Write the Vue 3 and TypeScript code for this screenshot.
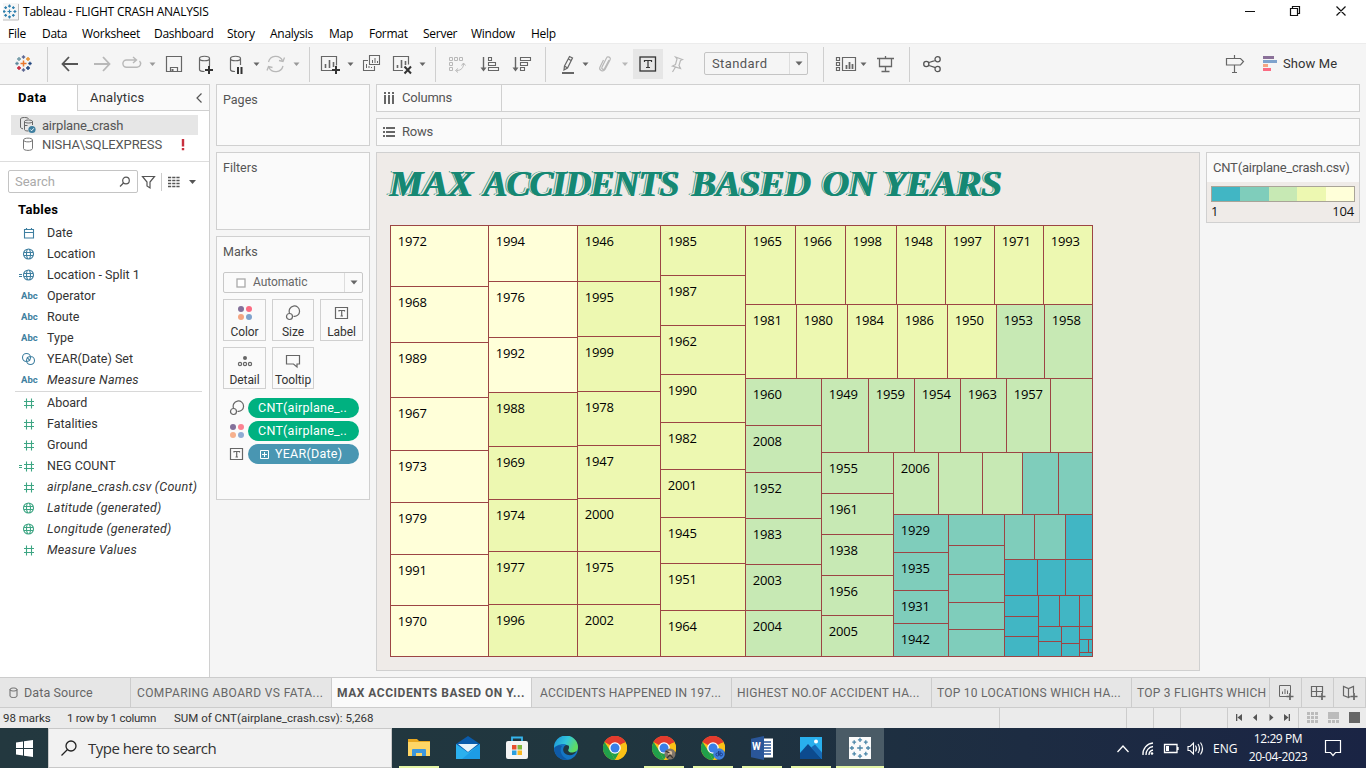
<script setup lang="ts">
interface Shape { d: string; s?: string; f?: string; w?: number }
interface Icon { x: number; w: number; p: Shape[] }

const G = '#666'
const L = '#b8b8b8'
const K = '#333'
const st = (d: string, s = G, w = 1.3): Shape => ({ d, s, w })
const fl = (d: string, f = G): Shape => ({ d, f })
const caret = (x: number, c = G) => fl(`M${x - 3} 62.5h6l-3 3.6z`, c)
const sep = (x: number) => fl(`M${x} 47h1v35h-1z`, '#cfcfcf')
const cross = (x: number, y: number, r: number, c: string, w = 1.3) =>
  st(`M${x - r} ${y}h${2 * r}M${x} ${y - r}v${2 * r}`, c, w)

const toolsA: Icon[] = [
  { x: 0, w: 60, p: [
    cross(23.5, 63.5, 3, '#e8762d', 1.5), cross(23.5, 57, 1.7, '#5b6591'), cross(23.5, 70, 1.7, '#5b6591'),
    cross(17, 63.5, 1.7, '#5b879b'), cross(30, 63.5, 1.7, '#1f447e'),
    cross(19, 59, 2, '#7199a6', 1.4), cross(28, 59, 2, '#eb912c', 1.4), cross(19, 68, 2, '#c72035', 1.4), cross(28, 68, 2, '#1f447e', 1.4),
    sep(47) ] },
  { x: 60, w: 28, p: [st('M62.5 64H78M69 57l-6.5 7 6.5 7', '#555', 1.8)] },
  { x: 88, w: 32, p: [st('M94 64h15.500M103 57l6.500 7-6.500 7', L, 1.8)] },
  { x: 120, w: 42, p: [st('M135.500 60h-9a3.600 3.600 0 0 0 0 7.200h10.500a3.600 3.600 0 0 0 2.500-6.200M133 57l3.500 3-3.500 3', L, 1.4), caret(152.500, '#999')] },
  { x: 162, w: 32, p: [st('M166.500 56.500h15v15h-15zM170.500 71v-3.500h7V71', G, 1.2), fl('M171.500 69h2v2h-2z')] },
  { x: 194, w: 32, p: [
    st('M199.500 58.500v11c0 1 2 2 5 2M209.500 58.500V66M199.500 58.500c0-3 10-3 10 0s-10 3-10 0', G, 1.2), cross(209, 70, 4, K, 2)] },
  { x: 226, w: 38, p: [
    st('M230.500 58.500v11c0 1 2 2 4.500 2M240.500 58.500V65M230.500 58.500c0-3 10-3 10 0s-10 3-10 0', G, 1.2),
    fl('M237 67h2v7h-2zM240.500 67h2v7h-2z', K), caret(256.500)] },
  { x: 264, w: 54, p: [
    st('M268.500 62a7.500 7.500 0 0 1 14-1.500M283 66a7.500 7.500 0 0 1-14 1.500M284.500 57.500l-1.500 4-4-1M267 70.500l1.500-4 4 1', L, 1.3), caret(296.500, '#999'), sep(309)] },
  { x: 318, w: 42, p: [
    st('M334 70.500h-12.500v-14h15v9', G, 1.2), st('M325.500 68v-4M329.500 68v-8M333.500 67v-5', G, 1.6), cross(336, 70, 4, K, 2), caret(350.500)] },
  { x: 360, w: 30, p: [
    st('M369.500 55.500h10v9h-10zM368 60.500h-4.500v10h11v-4.500', G, 1.1), st('M372.500 63v-3M375 63v-5M377.500 63v-2M366.500 68v-4M369 68v-2M371.500 68v-1', G, 1)] },
  { x: 390, w: 55, p: [
    st('M403 70.500h-9.500v-14h15v8', G, 1.2), st('M397.500 68v-3M401.500 68v-8M405.500 65v-4', G, 1.6), st('M404.500 66.500l6.500 7M411 66.500l-6.500 7', K, 2), caret(422.500), sep(435)] },
  { x: 445, w: 31, p: [
    st('M449.500 57.500h3v3h-3zM454.500 57.500h3v3h-3zM459.500 57.500h3v3h-3zM449.500 62.500h3v3h-3zM449.500 67.500h3v3h-3zM463.500 63.500c0 4-2 7-7 7M461.500 65.500l2-2.500 2 2.500M458 68.500l-2.500 2 2.500 2', L, 1)] },
  { x: 475, w: 31, p: [
    st('M482.500 57v12', G, 1.4), fl('M479.500 67.500h6l-3 4z'), st('M487.500 57.500h3v3h-3zM487.500 62.500h7v3h-7zM487.500 67.500h10v3h-10z', G, 1.1)] },
  { x: 505, w: 46, p: [
    st('M513.500 57v12', G, 1.4), fl('M510.500 67.500h6l-3 4z'), st('M518.500 57.500h10v3h-10zM518.500 62.500h7v3h-7zM518.500 67.500h4v3h-4z', G, 1.1), sep(543)] },
  { x: 549, w: 37, p: [
    st('M560.500 66l5-9.500 3 1.500-5 10-3.500 2zM560.500 66l3 2M564.500 59l2.500 1.500', G, 1.2), fl('M558 72h12v2h-12z'), caret(581.500)] },
  { x: 585.5, w: 43, p: [
    st('M604.500 60l-4.500 8.500c-1 1.700-3.500.5-2.500-1.500l4.500-9c1-2.500 5-.5 3.500 2l-5 9.500c-2 3-6.500.5-5-2.500l3.500-7', L, 1.2), caret(620.500, L)] },
]
const toolsB: Icon[] = [
  { x: 656, w: 41, p: [st('M668.500 57l7 2.500-2 1-1.500 5 1.500 3-8-2.500 3-1.500 1.500-5.500zM668.500 67l-3 5', L, 1.2)] },
]
const toolsC: Icon[] = [
  { x: 795, w: 60, p: [
    sep(810), st('M823.500 57.500h3v3h-3zM823.500 62.500h3v3h-3zM823.500 67.500h3v3h-3zM829.500 57.500h13v13h-13z', G, 1.2),
    st('M833.500 69v-4M836.500 69v-7M839.500 69v-5', G, 1.8), caret(850.500)] },
  { x: 854, w: 46, p: [st('M863 58.500h17M865.500 58.500v8h12v-8M871.500 56v2M871.500 67v4M867.500 71.500h8', G, 1.3), sep(895)] },
  { x: 896, w: 30, p: [st('M908 64m-2.300 0a2.600 2.600 0 1 0 5.200 0a2.600 2.600 0 1 0-5.200 0M917 59.200a2.600 2.600 0 1 0 5.200 0a2.600 2.600 0 1 0-5.200 0M917 69a2.600 2.600 0 1 0 5.200 0a2.600 2.600 0 1 0-5.200 0M911 62.500l6.500-2.200M911 65.500l6.500 2.200', '#555', 1.3)] },
]
const toolsR: Icon[] = [
  { x: 1222, w: 36, p: [st('M1226.500 58.500h14l3 3-3 3.500h-14zM1234.500 55v3.500M1234.500 65v7M1232 72.500h5', G, 1.2)] },
  { x: 1258, w: 25, p: [fl('M1263 56h11v3h-11z', '#8a7098'), fl('M1263 60h14v3h-14z', '#7fa3cd'), fl('M1263 64h5v3h-5z', '#f4a582'), fl('M1263 68h8v3h-8z', '#fb6b82')] },
]

const menu = ['File', 'Data', 'Worksheet', 'Dashboard', 'Story', 'Analysis', 'Map', 'Format', 'Server', 'Window', 'Help']

const dims = [
  { k: 'cal', t: 'Date' }, { k: 'globe', t: 'Location' }, { k: 'eglobe', t: 'Location - Split 1' },
  { k: 'abc', t: 'Operator' }, { k: 'abc', t: 'Route' }, { k: 'abc', t: 'Type' },
  { k: 'set', t: 'YEAR(Date) Set' }, { k: 'abc', t: 'Measure Names', i: true },
]
const meas = [
  { k: 'num', t: 'Aboard' }, { k: 'num', t: 'Fatalities' }, { k: 'num', t: 'Ground' }, { k: 'enum', t: 'NEG COUNT' },
  { k: 'num', t: 'airplane_crash.csv (Count)', i: true }, { k: 'globe', t: 'Latitude (generated)', i: true },
  { k: 'globe', t: 'Longitude (generated)', i: true }, { k: 'num', t: 'Measure Values', i: true },
]

interface Cell { x: number; y: number; w: number; h: number; c: string; t: string }
const ramp = ['#41b6c4', '#7fcdbb', '#c7e9b4', '#edf8b1', '#ffffd9']
const cells: Cell[] = []
function add(x0: number, y0: number, x1: number, y1: number, c: number, t: string) {
  cells.push({ x: x0, y: y0, w: x1 - x0, h: y1 - y0, c: ramp[c], t })
}
function column(x0: number, x1: number, ys: number[], tones: string, labels = '') {
  const names = labels.split(' ')
  for (let i = 0; i < ys.length - 1; i++) add(x0, ys[i], x1, ys[i + 1], +tones[i], names[i] ?? '')
}
function row(y0: number, y1: number, xs: number[], tones: string, labels = '') {
  const names = labels.split(' ')
  for (let i = 0; i < xs.length - 1; i++) add(xs[i], y0, xs[i + 1], y1, +tones[i], names[i] ?? '')
}
column(390, 488, [225, 286, 342, 397, 450, 502, 554, 605, 656], '44444444', '1972 1968 1989 1967 1973 1979 1991 1970')
column(488, 577, [225, 281, 337, 392, 446, 499, 551, 604, 656], '44433333', '1994 1976 1992 1988 1969 1974 1977 1996')
column(577, 660, [225, 281, 336, 391, 445, 498, 551, 604, 656], '33333333', '1946 1995 1999 1978 1947 2000 1975 2002')
column(660, 745, [225, 275, 325, 374, 422, 469, 517, 563, 610, 656], '333333333', '1985 1987 1962 1990 1982 2001 1945 1951 1964')
row(225, 304, [745, 795, 845, 896, 945, 994, 1043, 1092], '3333333', '1965 1966 1998 1948 1997 1971 1993')
row(304, 378, [745, 796, 847, 897, 947, 996, 1044, 1092], '3333322', '1981 1980 1984 1986 1950 1953 1958')
column(745, 821, [378, 425, 472, 518, 564, 610, 656], '222222', '1960 2008 1952 1983 2003 2004')
row(378, 452, [821, 868, 914, 960, 1006, 1050, 1092], '222222', '1949 1959 1954 1963 1957')
column(821, 893, [452, 493, 534, 575, 615, 656], '22222', '1955 1961 1938 1956 2005')
row(452, 514, [893, 938, 982, 1022, 1058, 1092], '22211', '2006')
column(893, 948, [514, 552, 590, 623, 656], '1111', '1929 1935 1931 1942')
column(948, 1004, [514, 545, 574, 602, 629, 656], '11111')
row(514, 559, [1004, 1034, 1065, 1092], '110')
row(559, 595, [1004, 1037, 1065, 1092], '000')
column(1004, 1038, [595, 616, 636, 656], '000')
row(595, 626, [1038, 1059, 1079, 1092], '000')
column(1038, 1061, [626, 641, 656], '00')
column(1061, 1079, [626, 643, 656], '00')
add(1079, 626, 1092, 639, 0, '')
row(639, 652, [1079, 1088, 1092], '00')
add(1079, 652, 1092, 656, 0, '')

const sheets = [
  { t: 'COMPARING ABOARD VS FATA...', wide: true }, { t: 'MAX ACCIDENTS BASED ON Y...', on: true }, { t: 'ACCIDENTS HAPPENED IN 197...', after: true },
  { t: 'HIGHEST NO.OF ACCIDENT HA...' }, { t: 'TOP 10 LOCATIONS WHICH HA...' }, { t: 'TOP 3 FLIGHTS WHICH' },
]
const plusRing = [[0, 0, 3.2], [0, -6, 2.4], [0, 6, 2.4], [-6, 0, 2.4], [6, 0, 2.4], [-4.300, -4.300, 2.200], [4.300, -4.300, 2.200], [-4.300, 4.300, 2.200], [4.300, 4.300, 2.200]]
const ringPath = (cx: number, cy: number, k: number, m = 1) =>
  plusRing.map(([x, y, r]) => `M${cx + x * k - r * k * m} ${cy + y * k}h${2 * r * k * m}M${cx + x * k} ${cy + y * k - r * k * m}v${2 * r * k * m}`).join('')
</script>

<template>
  <div class="app">
    <header class="title">
      <svg width="17" height="18" viewBox="0 0 17 18"><path d="M0 0h16v17H0z" fill="#f6f6f6" /><path d="M15.500 1v16H0" stroke="#bbb" fill="none" /><path :d="ringPath(6.5, 8.5, 0.9, 0.7)" stroke="#2f80ae" stroke-width="1.200" /></svg>
      <span class="name">Tableau - FLIGHT CRASH ANALYSIS</span>
      <svg class="win" width="110" height="20" viewBox="1242 0 110 20"><g stroke="#111" fill="none" stroke-width="1.200"><path d="M1245 10.500h10M1290.500 7.500h7v7h-7zM1292.500 7V5.500h7v7H1298M1336.500 5.500l9 9M1345.500 5.500l-9 9" /></g></svg>
    </header>
    <nav class="menu"><span v-for="m in menu" :key="m">{{ m }}</span></nav>

    <div class="tools">
      <svg v-for="i in toolsA" :key="i.x" :width="i.w" height="40" :viewBox="`${i.x} 44 ${i.w} 40`"><path v-for="(p, n) in i.p" :key="n" :d="p.d" :stroke="p.s || 'none'" :fill="p.f || 'none'" :stroke-width="p.w" /></svg>
      <div class="tbtn"><svg width="18" height="16" viewBox="0 0 18 16"><rect x="1" y="1" width="15.500" height="14" fill="none" stroke="#333" stroke-width="1.300" /><path d="M5.500 6V4.500h7V6M9 4.500v7M7 11.500h4" fill="none" stroke="#333" stroke-width="1.200" /></svg></div>
      <svg v-for="i in toolsB" :key="i.x" :width="i.w" height="40" :viewBox="`${i.x} 44 ${i.w} 40`"><path v-for="(p, n) in i.p" :key="n" :d="p.d" :stroke="p.s || 'none'" :fill="p.f || 'none'" :stroke-width="p.w" /></svg>
      <div class="fit"><span>Standard</span><i><svg width="8" height="5" viewBox="0 0 8 5"><path d="M.5.500h7L4 4.500z" fill="#666" /></svg></i></div>
      <svg v-for="i in toolsC" :key="i.x" :width="i.w" height="40" :viewBox="`${i.x} 44 ${i.w} 40`"><path v-for="(p, n) in i.p" :key="n" :d="p.d" :stroke="p.s || 'none'" :fill="p.f || 'none'" :stroke-width="p.w" /></svg>
      <div class="grow"></div>
      <svg v-for="i in toolsR" :key="i.x" :width="i.w" height="40" :viewBox="`${i.x} 44 ${i.w} 40`"><path v-for="(p, n) in i.p" :key="n" :d="p.d" :stroke="p.s || 'none'" :fill="p.f || 'none'" :stroke-width="p.w" /></svg>
      <span class="showme">Show Me</span>
    </div>

    <main class="body">
      <aside class="pane">
        <div class="ptabs"><b>Data</b><div><span>Analytics</span><svg width="8" height="12" viewBox="0 0 8 12"><path d="M6.500 1.500L2 6l4.500 4.500" fill="none" stroke="#555" stroke-width="1.200" /></svg></div></div>
        <div class="sources">
          <div class="src on">
            <svg width="18" height="18" viewBox="0 0 18 18"><g fill="none" stroke="#666"><path d="M1.500 3c0-2 8-2 8 0M1.500 3v8c0 1 1 1.500 2.500 1.800" /><path d="M5.500 5.500c0-2 8-2 8 0s-8 2-8 0v8c0 1 1.500 1.500 4 1.500M13.500 5.500V9M5.500 9.500h3" /></g><circle cx="13" cy="13.500" r="3.600" fill="#3e7fa0" /><path d="M11.300 13.500l1.300 1.300 2.200-2.500" stroke="#fff" fill="none" /></svg>
            <span class="s1">airplane_crash</span>
          </div>
          <div class="src">
            <svg width="18" height="18" viewBox="0 0 18 18"><path d="M4.500 4v8.500c0 2.500 9 2.500 9 0V4c0-2.500-9-2.500-9 0s9 2.500 9 0" fill="none" stroke="#777" /></svg>
            <span class="s2">NISHA\SQLEXPRESS</span>
            <svg class="bang" width="4" height="12" viewBox="0 0 4 12"><path d="M.8 0h2.400v7.500H.8zM.8 9h2.400v2.300H.8z" fill="#c8303f" /></svg>
          </div>
        </div>
        <div class="find">
          <div class="box"><span>Search</span><svg width="12" height="12" viewBox="0 0 12 12"><circle cx="7" cy="4.500" r="3.300" fill="none" stroke="#555" stroke-width="1.200" /><path d="M4.500 7L1 10.500" stroke="#555" stroke-width="1.200" /></svg></div>
          <svg width="62" height="20" viewBox="138 171 62 20"><path d="M142.500 175.500h12l-4.500 5.500v6l-3-2v-4z" fill="none" stroke="#555" stroke-width="1.200" /><path d="M161.500 172v18" stroke="#ccc" /><path d="M168 176.500h12M168 179.500h12M168 182.500h12M168 185.500h12" stroke="#555" stroke-width="1.300" stroke-dasharray="3.200 1" /><path d="M189 179h7l-3.500 4z" fill="#555" /></svg>
        </div>
        <h4>Tables</h4>
        <ul v-for="(group, g) in [dims, meas]" :key="g" :class="['fields', g ? 'green' : 'blue']">
          <li v-for="f in group" :key="f.t">
            <b v-if="f.k === 'abc'">Abc</b>
            <svg v-else width="20" height="14" viewBox="0 0 20 14" fill="none" stroke="currentColor" stroke-width="1.100">
              <path v-if="f.k === 'cal'" d="M5.500 3.500h9v8.500h-9zM5.500 6.500h9M7.500 2v2M12.500 2v2" />
              <path v-if="f.k.endsWith('globe')" d="M4.500 7a5 5 0 1 0 10 0a5 5 0 1 0-10 0M7.500 7a2 5 0 1 0 4 0a2 5 0 1 0-4 0M5 5.500h9M5 8.500h9" />
              <path v-if="f.k === 'eglobe' || f.k === 'enum'" d="M0 6.500h3M0 8.500h3" />
              <path v-if="f.k === 'set'" d="M3.500 5.500a4 4 0 1 0 8 0a4 4 0 1 0-8 0M7.500 8.500a4 4 0 1 0 8 0a4 4 0 1 0-8 0M8 5l3 4" />
              <path v-if="f.k.endsWith('num')" d="M5 5.500h10M5 9.500h10M7.500 2.500v10M12.500 2.500v10" />
            </svg>
            <span :class="{ it: f.i }">{{ f.t }}</span>
          </li>
        </ul>
      </aside>

      <section class="shelves">
        <div class="card pages"><span>Pages</span></div>
        <div class="card filters"><span>Filters</span></div>
        <div class="card marks">
          <span>Marks</span>
          <div class="auto"><svg width="10" height="10" viewBox="0 0 10 10"><rect x="1" y="1" width="8" height="8" fill="#fff" stroke="#aaa" stroke-width="1.300" /></svg><span>Automatic</span><i><svg width="8" height="5" viewBox="0 0 8 5"><path d="M.5.500h7L4 4.500z" fill="#666" /></svg></i></div>
          <div class="btns">
            <div><svg width="16" height="16" viewBox="0 0 16 16"><circle cx="4" cy="4" r="3" fill="#83709a" /><circle cx="12" cy="4" r="3" fill="#fb6b82" /><circle cx="4" cy="12" r="3" fill="#f4a582" /><circle cx="12" cy="12" r="3" fill="#7fa3cd" /></svg>Color</div>
            <div><svg width="16" height="16" viewBox="0 0 16 16" fill="none" stroke="#666" stroke-width="1.200"><path d="M4.500 8a5.200 5.200 0 1 1 4 3.300" /><circle cx="4.500" cy="11.500" r="3" /></svg>Size</div>
            <div><svg width="16" height="16" viewBox="0 0 16 16" fill="none" stroke="#666" stroke-width="1.200"><path d="M1.500 2.500h12v11h-12zM5 6.500v-1h5.500v1M7.700 5.500V11M6.500 11H9" /></svg>Label</div>
            <div><svg width="16" height="16" viewBox="0 0 16 16" fill="none" stroke="#666" stroke-width="1.200"><circle cx="8" cy="5" r="2" fill="#666" stroke="none" /><circle cx="3" cy="11" r="1.600" /><circle cx="8" cy="11" r="1.600" /><circle cx="13" cy="11" r="1.600" /></svg>Detail</div>
            <div><svg width="16" height="16" viewBox="0 0 16 16" fill="none" stroke="#666" stroke-width="1.200"><path d="M1.500 2.500h13v8.500h-2.500v3l-3.500-3h-7z" /></svg>Tooltip</div>
          </div>
          <div class="pill"><svg width="16" height="16" viewBox="0 0 16 16" fill="none" stroke="#666" stroke-width="1.200"><path d="M4.500 8a5.200 5.200 0 1 1 4 3.300" /><circle cx="4.500" cy="11.500" r="3" /></svg><span>CNT(airplane_..</span></div>
          <div class="pill"><svg width="16" height="16" viewBox="0 0 16 16"><circle cx="4" cy="4" r="3" fill="#83709a" /><circle cx="12" cy="4" r="3" fill="#fb8291" /><circle cx="4" cy="12" r="3" fill="#f6b08d" /><circle cx="12" cy="12" r="3" fill="#8fabd3" /></svg><span>CNT(airplane_..</span></div>
          <div class="pill date"><svg width="16" height="16" viewBox="0 0 16 16" fill="none" stroke="#666" stroke-width="1.200"><path d="M1.500 2.500h12v11h-12zM5 6.500v-1h5.500v1M7.700 5.500V11M6.500 11H9" /></svg><span><svg width="11" height="9" viewBox="-2 0 11 9"><path d="M.5.500h8v8h-8zM4.500 2v5M2 4.500h5" fill="none" stroke="#fff" /></svg>YEAR(Date)</span></div>
        </div>
      </section>

      <section class="work">
        <div class="shelf"><div><svg width="12" height="12" viewBox="0 0 12 12"><path d="M1 0h2v2H1zM5 0h2v2H5zM9 0h2v2H9zM1 3h2v9H1zM5 3h2v9H5zM9 3h2v9H9z" fill="#666" /></svg><span class="cols">Columns</span></div></div>
        <div class="shelf"><div><svg width="12" height="12" viewBox="0 0 12 12"><path d="M0 1h2v2H0zM0 5h2v2H0zM0 9h2v2H0zM3 1h9v2H3zM3 5h9v2H3zM3 9h9v2H3z" fill="#666" /></svg><span>Rows</span></div></div>
        <div class="lower">
          <div class="sheet">
            <h1><span class="w1">MAX</span> <span class="w2">ACCIDENTS</span> <span class="w3">BASED</span> <span class="w4">ON</span> <span class="w5">YEARS</span></h1>
            <svg class="tree" width="704" height="433" viewBox="390 225 704 433">
              <g v-for="(c, n) in cells" :key="n">
                <rect :x="c.x + 0.5" :y="c.y + 0.5" :width="c.w" :height="c.h" :fill="c.c" stroke="#9c4544" />
                <text v-if="c.t" :x="c.x + 7.7" :y="c.y + 21">{{ c.t }}</text>
              </g>
            </svg>
          </div>
          <div class="legend">
            <div class="lhead">CNT(airplane_crash.csv)</div>
            <div class="strip"><i></i><i></i><i></i><i></i><i></i></div>
            <div class="ends"><span>1</span><span>104</span></div>
          </div>
        </div>
      </section>
    </main>

    <div class="tabs">
      <div class="ds"><svg width="9" height="12" viewBox="0 0 9 12"><path d="M1 2.500V9c0 2 7 2 7 0V2.500c0-2-7-2-7 0s7 2 7 0" fill="none" stroke="#666" /></svg><span>Data Source</span></div>
      <div v-for="s in sheets" :key="s.t" :class="{ on: s.on, wide: s.wide, after: s.after }"><span>{{ s.t }}</span></div>
      <div class="nw"><svg width="18" height="18" viewBox="0 0 18 18" fill="none" stroke="#666"><path d="M11 12.500H2.500v-11h11V9M5.500 10V7.500M8 10V5M10.500 10V6.500" /><path d="M13 9v7M9.500 12.500h7" stroke-width="1.700" /></svg></div>
      <div class="nw"><svg width="18" height="18" viewBox="0 0 18 18" fill="none" stroke="#666"><path d="M10 12.500H2.500v-10h11V9M2.500 7.500h11M7.500 2.500v10" stroke-width="1.200" /><path d="M13 9v7M9.500 12.500h7" stroke-width="1.700" /></svg></div>
      <div class="nw"><svg width="18" height="18" viewBox="0 0 18 18" fill="none" stroke="#666"><path d="M7.500 13.500l-5-2v-9l5 2 5-2V9M7.500 4.500v9l2-1" stroke-width="1.200" /><path d="M13 9v7M9.500 12.500h7" stroke-width="1.700" /></svg></div>
    </div>
    <div class="status">
      <span class="a">98 marks</span><span class="b">1 row by 1 column</span><span class="c">SUM of CNT(airplane_crash.csv): 5,268</span>
      <svg width="367" height="20" viewBox="999 708 367 20"><path d="M999.500 708v20M1126.500 708v20M1153.500 708v20M1180.500 708v20M1227.500 708v20M1298.500 708v20" stroke="#ccc" /><path d="M1236 714h1.300v7H1236zM1242 714v7l-4.500-3.500zM1257 714v7l-4-3.500zM1269.500 714v7l4-3.500zM1284 714v7l4.500-3.500zM1288.700 714h1.300v7h-1.300z" fill="#555" /><path d="M1307 712h3v3h-3zM1311 712h3v3h-3zM1315 712h3v3h-3zM1307 716h3v3h-3zM1311 716h3v3h-3zM1315 716h3v3h-3zM1307 720h3v3h-3zM1311 720h3v3h-3zM1315 720h3v3h-3zM1328 712h11v7h-11zM1328 720h3v3h-3zM1332 720h3v3h-3zM1336 720h3v3h-3z" fill="#bbb" /><path d="M1349 712h11v11h-11z" fill="#666" /></svg>
    </div>

    <footer class="bar">
      <div class="start"><svg width="17" height="17" viewBox="0 0 17 17"><path d="M0 2.400L7 1.400V8H0zM8 1.200L17 0v8H8zM0 9h7v6.600l-7-1zM8 9h9v8l-9-1.200z" fill="#fff" /></svg></div>
      <div class="ask"><svg width="18" height="18" viewBox="0 0 18 18"><circle cx="11" cy="7" r="5" fill="none" stroke="#222" stroke-width="1.300" /><path d="M7.500 10.500L1.500 16.500" stroke="#222" stroke-width="1.300" /></svg><span>Type here to search</span></div>
      <div class="apps">
        <div class="run"><svg width="24" height="24" viewBox="0 0 24 24"><path d="M1 3h9l2 2h11v15H1z" fill="#e9a820" /><path d="M1 6h22v14H1z" fill="#ffd666" /><path d="M5 20v-6q0-1 1-1h12q1 0 1 1v6h-4v-3H9v3z" fill="#3d97dd" /></svg></div>
        <div><svg width="24" height="24" viewBox="0 0 24 24"><path d="M0 8L12 0l12 8v15H0z" fill="#0a5bab" /><path d="M2 8h20l-10 8z" fill="#e8f4fb" /><path d="M0 8l12 8.500L24 8v15H0z" fill="#2bb0ee" /><path d="M24 8v15H6z" fill="#1490df" opacity=".6" /></svg></div>
        <div><svg width="24" height="24" viewBox="0 0 24 24"><path d="M7 6V1.500h10V6" fill="none" stroke="#35b4ec" stroke-width="1.800" /><rect x="1" y="5" width="22" height="18" rx="2" fill="#f4f4f4" /><path d="M7 9h4.500v4.500H7z" fill="#e8502e" /><path d="M12.500 9H17v4.500h-4.500z" fill="#7fb83d" /><path d="M7 14.500h4.500V19H7z" fill="#2a9fe0" /><path d="M12.500 14.500H17V19h-4.500z" fill="#fbb822" /></svg></div>
        <div><svg width="24" height="24" viewBox="0 0 24 24"><defs><linearGradient id="eg" x1="0" y1="0" x2="1" y2=".4"><stop offset="0" stop-color="#1a8fd6" /><stop offset=".55" stop-color="#32c5dc" /><stop offset="1" stop-color="#5fdc62" /></linearGradient></defs><circle cx="12" cy="12" r="12" fill="#1475c4" /><path d="M0 12A12 12 0 0 1 24 11c0 4-3 6-6.500 6-3.500 0-4.500-1.500-3.500-3 1.500-2.500-.5-6-5-6-4 0-8 2.500-9 4z" fill="url(#eg)" /><path d="M14.500 9.500c1.500 2.500-.5 3.500-.3 5 .3 2 4 3 8.300.800C20 20 14 20 11 17.500 8 15 9 10.500 12 9z" fill="#203743" /><path d="M8 10c-3 4-1 11 6 13.500C6 25 0 19 .3 12 3 9 6 8.500 8 10z" fill="#0f5aa6" /></svg></div>
        <div v-for="n in 3" :key="n" :class="{ run: n > 1 }"><svg width="24" height="24" viewBox="0 0 24 24"><circle cx="12" cy="12" r="12" fill="#fbc116" /><path d="M12 12L1.600 6A12 12 0 0 1 22.400 6z" fill="#e33b2e" /><path d="M1.600 6L7.300 15 12 24A12 12 0 0 1 1.600 6z" fill="#21a04b" /><path d="M7 14.500L12 24l5-9z" fill="#21a04b" /><path d="M12 24l5.200-9L17 9l5.400-3A12 12 0 0 1 12 24z" fill="#fbc116" /><path d="M1.600 6L12 6.500h10.600A12 12 0 0 0 1.600 6z" fill="#e33b2e" /><circle cx="12" cy="12" r="5.800" fill="#fff" /><circle cx="12" cy="12" r="4.500" fill="#397ee8" /><g v-if="n === 2"><circle cx="18" cy="18" r="5.500" fill="#80766b" /><circle cx="18" cy="17" r="2.200" fill="#d9bd9b" /><path d="M13.500 15l4 2M15 22l3-3 3 3" stroke="#3b3732" stroke-width="1.300" fill="none" /></g><g v-if="n === 3"><circle cx="18" cy="18" r="5.800" fill="#3f7fdc" /><path d="M15 18.500a1.500 1.500 0 1 0 3 0a1.500 1.500 0 1 0-3 0M18.500 18.500a1.500 1.500 0 1 0 3 0a1.500 1.500 0 1 0-3 0M17.500 15v4M19 15v4" stroke="#1f3f88" fill="none" /></g></svg></div>
        <div class="run"><svg width="24" height="24" viewBox="0 0 24 24"><path d="M12 2.500h11v19H12z" fill="#fff" /><path d="M14 6h7M14 9h7M14 12h7M14 15h7M14 18h7" stroke="#2a5699" stroke-width="1.400" /><path d="M1 2.800L14 0v24L1 21.200z" fill="#2a5699" /></svg><b>W</b></div>
        <div class="run"><svg width="24" height="24" viewBox="0 0 24 24"><path d="M1 1h22v22H1z" fill="#29b0ee" /><path d="M1 17L9 8l14 15H1z" fill="#0c4a8e" /><path d="M12 11.500l4-3 7 8V23z" fill="#1769b5" /><circle cx="17" cy="5.500" r="2" fill="#fff" /></svg></div>
        <div class="run act"><svg width="24" height="24" viewBox="0 0 24 24"><path d="M1 1h22v22H1z" fill="#fafafa" /><path :d="ringPath(12, 12, 1.35, 0.65)" stroke="#4b86a8" stroke-width="1.300" /></svg></div>
      </div>
      <div class="grow"></div>
      <svg width="98" height="40" viewBox="1113 728 98 40" fill="none" stroke="#fff" stroke-width="1.300"><path d="M1117.500 752l5.500-6 5.500 6" /><path d="M1143 755a11 11 0 0 1 10-12M1146 755a8 8 0 0 1 7-8.500M1149 755a5 5 0 0 1 4-5" /><circle cx="1152" cy="753.500" r="1.300" fill="#fff" stroke="none" /><path d="M1164.500 744.500h12.500v8h-12.500zM1178 747v3" /><path d="M1166 746h3v5h-3z" fill="#fff" stroke="none" /><path d="M1188 746.500h2l3.500-3.500v11l-3.500-3.500h-2zM1195.500 745.500q2 3 0 6M1198 744q3 4.500 0 9M1200.500 742.500q4 6 0 12" stroke-width="1.100" /></svg>
      <span class="eng">ENG</span>
      <div class="clock"><span>12:29 PM</span><span>20-04-2023</span></div>
      <svg class="note" width="18" height="18" viewBox="0 0 18 18"><path d="M1.500 1.500h15v12h-5l-2.500 3-2.500-3h-5z" fill="none" stroke="#fff" stroke-width="1.200" /></svg>
    </footer>
  </div>
</template>

<style>
body { margin: 0; overflow: hidden; }
</style>
<style scoped>
* { box-sizing: border-box; }
svg { display: block; flex: none; }
span, b { white-space: nowrap; }
.app { width: 1366px; height: 768px; display: flex; flex-direction: column; background: #f5f5f5; font-family: Roboto, "Liberation Sans", sans-serif; font-size: 13px; color: #333; overflow: hidden; }
.title { height: 23px; background: #fff; display: flex; align-items: center; padding: 1px 14px 1px 3px; flex: none; }
.name { margin-left: 3px; font: 12px "Open Sans", sans-serif; color: #000; letter-spacing: -0.22px; }
.win { margin-left: auto; margin-bottom: 1px; }
.menu { height: 20px; flex: none; background: #fff; display: grid; grid-template-columns: 34px 40px 72px 73px 43px 59px 40px 54px 48px 60px 50px; padding-left: 8px; font: 12px/22px "Open Sans", sans-serif; color: #000; letter-spacing: -0.27px; }
.tools { height: 41px; flex: none; display: flex; align-items: flex-start; border-top: 1px solid #ececec; }
.tbtn { width: 30px; height: 30px; margin-top: 5px; background: #e6e6e6; display: flex; align-items: center; justify-content: center; }
.fit { width: 104px; height: 23px; margin-top: 8px; border: 1px solid #c4c4c4; border-radius: 2px; display: flex; align-items: center; color: #555; }
.fit span { flex: 1; padding-left: 7px; letter-spacing: 0.4px; }
.fit i, .auto i { width: 18px; height: 100%; border-left: 1px solid #ddd; display: flex; align-items: center; justify-content: center; }
.grow { flex: 1; }
.showme { font-size: 13px; line-height: 40px; width: 83px; letter-spacing: 0.1px; }
.body { height: 593px; flex: none; display: flex; }
.pane { width: 210px; background: #fff; border-right: 1px solid #d0d0d0; border-top: 1px solid #d0d0d0; flex: none; }
.ptabs { display: flex; height: 26px; font-size: 13px; line-height: 25px; }
.ptabs b { width: 77px; padding-left: 18px; color: #000; letter-spacing: 0.5px; }
.ptabs div { flex: 1; display: flex; align-items: center; justify-content: space-between; background: #fafafa; border-left: 1px solid #d0d0d0; border-bottom: 1px solid #d0d0d0; padding: 0 6px 0 12px; letter-spacing: 0.15px; }
.sources { padding: 4px 11px 0; height: 51px; border-bottom: 1px solid #ddd; }
.src { display: flex; align-items: center; height: 20px; padding: 0 0 1px 8px; color: #555; }
.src.on { background: #e6e6e6; padding-bottom: 0; }
.src span { margin-left: 5px; letter-spacing: -0.12px; }
.src .s1 { letter-spacing: -0.2px; }
.bang { margin-left: 19px; }
.find { display: flex; align-items: center; padding: 8px 0 0 8px; }
.box { width: 130px; height: 23px; border: 1px solid #c4c4c4; border-radius: 2px; display: flex; align-items: center; justify-content: space-between; padding: 0 6px; color: #aaa; }
h4 { margin: 7px 0 3px 18px; font-size: 13px; line-height: 20px; color: #000; letter-spacing: 0.3px; }
.fields { list-style: none; margin: 0; padding: 0; font-size: 12.5px; }
.fields li { height: 21px; display: flex; align-items: center; padding: 0 0 2px 19px; }
.fields li span { margin-left: 8px; color: #333; }
.fields li b { width: 20px; padding-left: 2px; font-size: 9.5px; }
.fields li .it { font-style: italic; letter-spacing: 0.25px; }
.blue { color: #3e7fa0; }
.green { color: #3da583; }
.green::before { content: ""; display: block; margin: 0 7px 1px 15px; height: 1px; background: #d8d8d8; }
.shelves { width: 166px; padding-left: 6px; display: flex; flex-direction: column; gap: 6px; flex: none; }
.card { width: 154px; border: 1px solid #d0d0d0; background: #fafafa; padding: 7px 6px; color: #555; font-size: 12.500px; line-height: 15px; }
.pages { height: 62px; }
.filters { height: 78px; }
.marks { height: 264px; }
.auto { margin: 13px 0 6px; height: 21px; width: 140px; border: 1px solid #c8c8c8; border-radius: 2px; display: flex; align-items: center; padding-left: 12px; }
.auto span { margin-left: 7px; flex: 1; font-size: 12px; color: #666; letter-spacing: -0.1px; }
.btns { display: grid; grid-template-columns: 43px 42px 43px; column-gap: 6px; row-gap: 6px; margin-bottom: 9px; }
.btns div { height: 42px; border: 1px solid #d0d0d0; display: flex; flex-direction: column; align-items: center; padding-top: 5px; gap: 4px; line-height: 15px; font-size: 12px; color: #333; letter-spacing: -0.1px; }
.pill { display: flex; align-items: center; margin: 0 0 3px 6px; height: 20px; }
.pill > span { margin-left: 3px; width: 111px; height: 20px; border-radius: 10px; background: #00b180; color: #fff; padding-left: 10px; line-height: 20px; display: flex; align-items: center; gap: 6px; letter-spacing: 0.25px; }
.pill.date > span { background: #4996b2; }
.work { width: 984px; display: flex; flex-direction: column; gap: 6px; }
.shelf { height: 28px; border: 1px solid #d0d0d0; background: #fafafa; }
.shelf div { width: 125px; height: 26px; display: flex; align-items: center; gap: 7px; padding: 0 0 1px 6px; border-right: 1px solid #d0d0d0; color: #555; letter-spacing: -0.2px; }
.lower { display: flex; align-items: flex-start; gap: 6px; }
.sheet { width: 824px; height: 519px; border: 1px solid #d0d0d0; background: #efebe8; padding: 9px 13px; }
h1 { margin: 0 0 0 -1px; height: 63px; display: grid; grid-template-columns: 94px 208px 131px 61px 140px; font: italic bold 36px/45px "Liberation Serif", serif; color: #168873; text-shadow: 1px 0 #168873, -1px -1px #efebe8, -2px -1px #3f9c8a; white-space: nowrap; }
h1 span { justify-self: start; transform-origin: 0 50%; }
.w1 { letter-spacing: -0.500px; transform: scaleX(1.06); }
.w2 { letter-spacing: -1.000px; }
.w3 { letter-spacing: -0.500px; transform: scaleX(1.03); }
.w4 { letter-spacing: -0.500px; transform: scaleX(1.03); }
.w5 { letter-spacing: -0.500px; transform: scaleX(1.06); }
.tree text { font: 13px "Open Sans", sans-serif; letter-spacing: -0.2px; fill: #000; }
.legend { width: 154px; height: 71px; border: 1px solid #d0d0d0; background: #efebe8; }
.lhead { height: 29px; background: #fafafa; line-height: 30px; padding-left: 6px; color: #555; white-space: nowrap; letter-spacing: -0.22px; }
.strip { display: flex; margin: 4px 4px 0; height: 16px; border: 1px solid #a9a498; }
.strip i { flex: 1; background: #41b6c4; }
.strip i:nth-child(2) { background: #7fcdbb; }
.strip i:nth-child(3) { background: #c7e9b4; }
.strip i:nth-child(4) { background: #edf8b1; }
.strip i:nth-child(5) { background: #ffffd9; }
.ends { display: flex; justify-content: space-between; padding: 0 5px 0 4px; font: 13px/18px "Open Sans", sans-serif; color: #111; letter-spacing: -0.2px; }
.tabs { height: 31px; flex: none; display: grid; grid-template-columns: 131px 201px 200px 200px 200px 200px 138px 32px 32px 32px; background: #e6e6e6; border-top: 1px solid #ccc; border-bottom: 1px solid #ccc; color: #666; font-size: 12px; letter-spacing: 0.26px; }
.tabs div { border-right: 1px solid #ccc; display: flex; align-items: center; padding-left: 5px; overflow: hidden; }
.tabs .ds { padding-left: 9px; gap: 6px; font-size: 12.500px; letter-spacing: 0.1px; }
.tabs .on { background: #fafafa; font-weight: bold; color: #555; padding-left: 5px; letter-spacing: 0.52px; }
.tabs .wide { letter-spacing: 0.4px; padding-left: 6px; }
.tabs .after { padding-left: 8px; letter-spacing: 0.18px; }
.tabs .nw { padding-left: 7px; }
.status { height: 20px; flex: none; background: #ebebeb; display: flex; line-height: 20px; font-size: 11.500px; color: #333; }
.status .a { padding-left: 3px; width: 67px; }
.status .b { width: 107px; letter-spacing: -0.25px; }
.status svg { margin-left: auto; }
.bar { height: 40px; flex: none; display: flex; align-items: center; background: linear-gradient(90deg, #23383f, #20363f 45%, #1d2c42 75%, #1a2444); color: #fff; }
.start { width: 48px; padding-left: 16px; }
.ask { width: 344px; height: 40px; background: #f2f2f2; border: 1px solid #c8c8c8; display: flex; align-items: center; padding-left: 11px; gap: 10px; color: #333; font: 15px "Open Sans", sans-serif; letter-spacing: -0.52px; }
.apps { display: flex; padding-left: 2px; height: 40px; }
.apps div { width: 49px; height: 40px; display: flex; align-items: center; justify-content: center; position: relative; }
.apps .run::after { content: ""; position: absolute; left: 5px; right: 4px; bottom: 0; height: 2px; background: #e4f5a6; }
.apps .act { background: #4a5b66; width: 48px; margin-left: 1px; }
.apps .act::after { left: 0; right: 0; }
.apps b { position: absolute; left: 15px; top: 13px; font-size: 10px; }
.eng { font: 12px "Open Sans", sans-serif; width: 36px; padding-left: 2px; }
.clock { width: 62px; display: flex; flex-direction: column; align-items: center; font: 12px/18px "Open Sans", sans-serif; letter-spacing: -0.4px; }
.note { margin: 0 24px 0 15px; }
</style>
